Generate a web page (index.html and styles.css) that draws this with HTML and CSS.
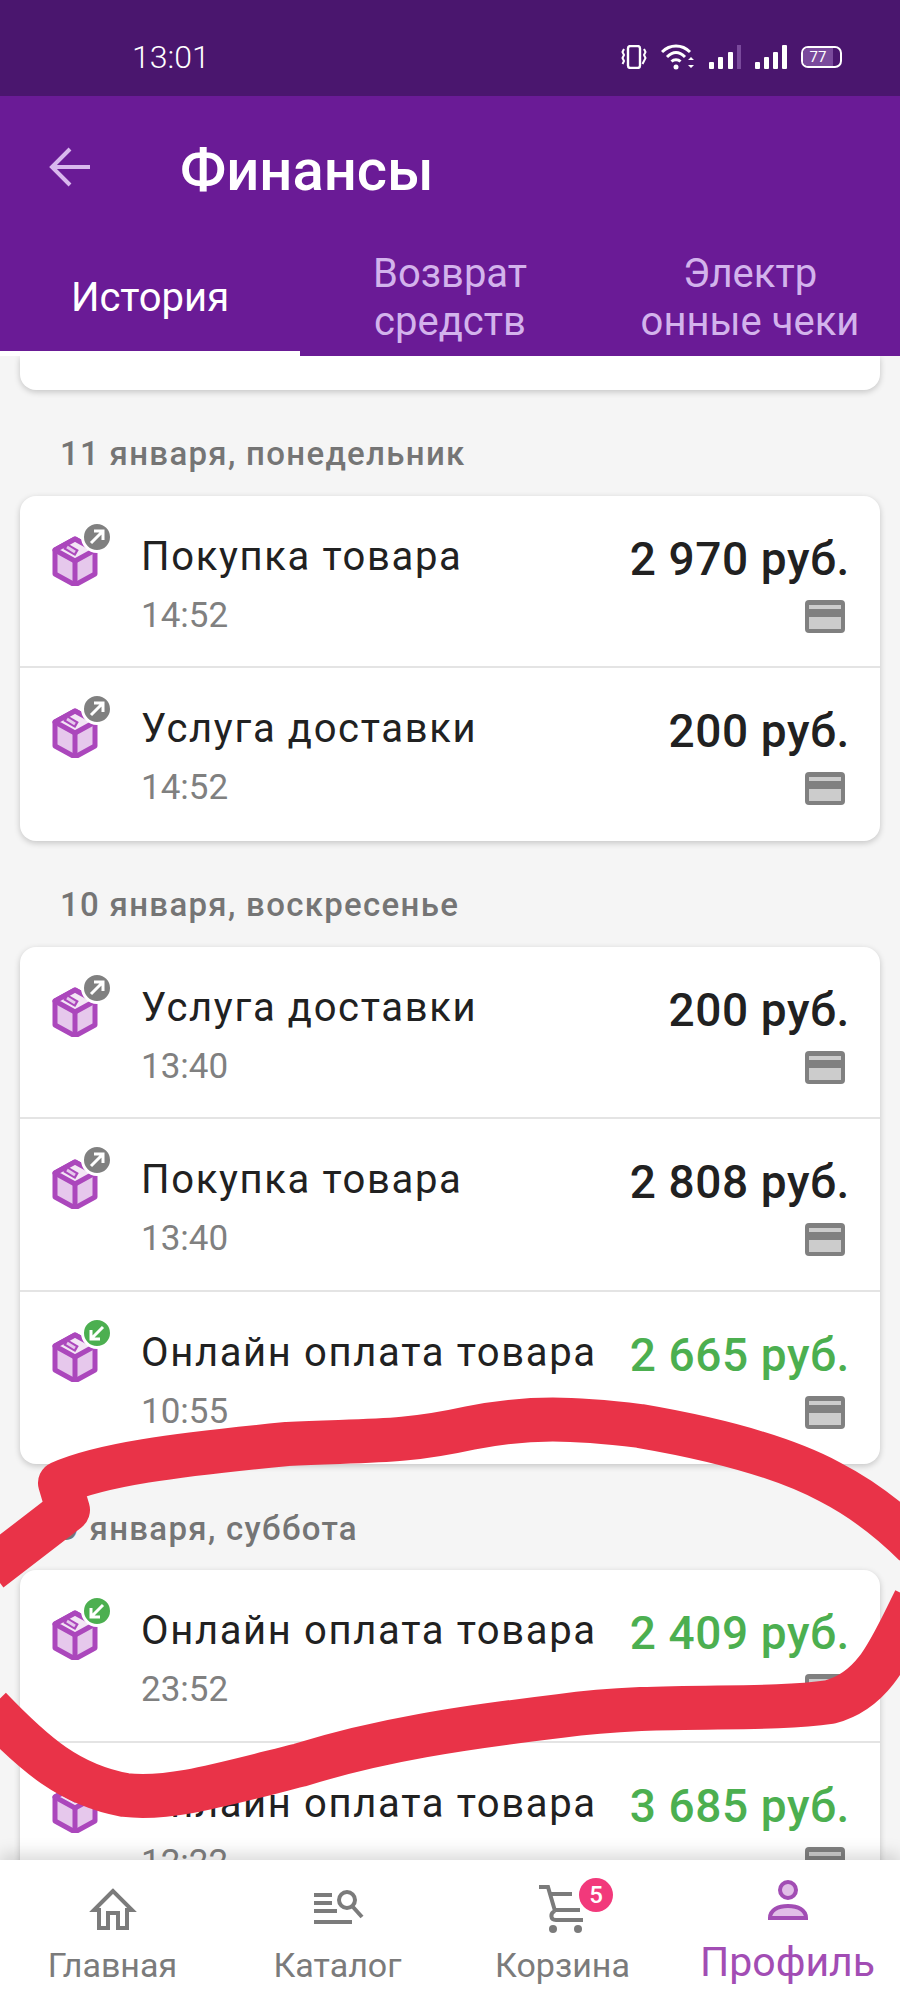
FILE: index.html
```html
<!DOCTYPE html>
<html lang="ru">
<head>
    <meta charset="UTF-8">
    <meta name="viewport" content="width=device-width, initial-scale=1.0">
    <title>Финансы</title>
    <link rel="stylesheet" href="styles.css">
</head>
<body>
    <svg class="defs">
        <symbol id="box" viewBox="0 0 64 64">
            <path d="M27 17L47 28V52L27 63L7 52V28Z" fill="#e6c8ec" stroke="#ab47bc" stroke-width="5" stroke-linejoin="round"/>
            <path d="M27 17L47 28L27 39L7 28Z" fill="#f3e5f5" stroke="#ab47bc" stroke-width="5" stroke-linejoin="round"/>
            <path d="M27 39V63" stroke="#ab47bc" stroke-width="5"/>
            <path d="M17 24L29 31" stroke="#ab47bc" stroke-width="7"/>
            <path d="M19 25L27 30" stroke="#e6c8ec" stroke-width="3"/>
        </symbol>
        <symbol id="bank-card" viewBox="0 0 40 33">
            <rect width="40" height="33" rx="4" fill="#808080"/>
            <rect x="4" y="5" width="32" height="4" fill="#ccc"/>
            <rect x="4" y="17" width="32" height="12" fill="#ccc"/>
        </symbol>
    </svg>

    <div class="screen">
        <div class="status-bar">
            <span class="clock">13:01</span>
            <div class="status-icons">
                <svg width="26" height="24" viewBox="0 0 26 24" fill="none" stroke="#fff" stroke-width="2"><rect x="7" y="1" width="12" height="22" rx="2.5" stroke-width="2.4"/><path d="M3 4l-1.5 3L3 10l-1.5 3L3 16l-1.5 3M23 4l1.5 3L23 10l1.5 3L23 16l-1.5 3"/></svg>
                <svg width="34" height="26" viewBox="0 0 34 26" fill="none" stroke="#fff" stroke-width="3"><path d="M1 8C9 0 21 0 29 8M6 13C12 7 18 7 24 13M10.500 17.500C13 15 17 15 19.500 17.500"/><circle cx="15" cy="23" r="2.500" fill="#fff" stroke="none"/><path d="M27 16l3-3 3 3zM27 21l3 3 3-3z" fill="#fff" stroke="none"/></svg>
                <svg width="32" height="26" viewBox="0 0 32 26" fill="#fff"><rect x="0" y="18" width="5" height="7" rx="1"/><rect x="9" y="13" width="5" height="12" rx="1"/><rect x="19" y="8" width="5" height="17" rx="1"/><rect x="28" y="1" width="4" height="24" fill="#7a4a9c"/></svg>
                <svg width="32" height="26" viewBox="0 0 32 26" fill="#fff"><rect x="0" y="18" width="5" height="7" rx="1"/><rect x="9" y="13" width="5" height="12" rx="1"/><rect x="18" y="8" width="5" height="17" rx="1"/><rect x="27" y="1" width="5" height="24" rx="1"/></svg>
                <div class="battery"><span class="battery-level">77</span></div>
            </div>
        </div>

        <div class="top-bar">
            <svg class="back" width="44" height="44" viewBox="0 0 44 44" fill="none" stroke="#d9b8ee" stroke-width="4"><path d="M42 21H5M22 3L4 21l18 18"/></svg>
            <h1 class="title">Финансы</h1>
        </div>

        <div class="tabs">
            <div class="tab active">История</div>
            <div class="tab">Возврат<br>средств</div>
            <div class="tab">Электр<br>онные чеки</div>
        </div>

        <div class="content">
            <div class="card card-cut"></div>

            <div class="day">11 января, понедельник</div>
            <div class="card">
                <div class="row">
                    <div class="op-icon"><svg width="64" height="64"><use href="#box"/></svg><span class="op-badge out"><svg width="18" height="18" viewBox="0 0 18 18" fill="none" stroke="#fff" stroke-width="3"><path d="M3 15L14 4M6 3h9v9"/></svg></span></div>
                    <div class="info"><div class="name">Покупка товара</div><div class="time">14:52</div></div>
                    <div class="sum"><div class="amount">2 970 руб.</div><svg width="40" height="33"><use href="#bank-card"/></svg></div>
                </div>
                <div class="row">
                    <div class="op-icon"><svg width="64" height="64"><use href="#box"/></svg><span class="op-badge out"><svg width="18" height="18" viewBox="0 0 18 18" fill="none" stroke="#fff" stroke-width="3"><path d="M3 15L14 4M6 3h9v9"/></svg></span></div>
                    <div class="info"><div class="name">Услуга доставки</div><div class="time">14:52</div></div>
                    <div class="sum"><div class="amount">200 руб.</div><svg width="40" height="33"><use href="#bank-card"/></svg></div>
                </div>
            </div>

            <div class="day">10 января, воскресенье</div>
            <div class="card">
                <div class="row">
                    <div class="op-icon"><svg width="64" height="64"><use href="#box"/></svg><span class="op-badge out"><svg width="18" height="18" viewBox="0 0 18 18" fill="none" stroke="#fff" stroke-width="3"><path d="M3 15L14 4M6 3h9v9"/></svg></span></div>
                    <div class="info"><div class="name">Услуга доставки</div><div class="time">13:40</div></div>
                    <div class="sum"><div class="amount">200 руб.</div><svg width="40" height="33"><use href="#bank-card"/></svg></div>
                </div>
                <div class="row">
                    <div class="op-icon"><svg width="64" height="64"><use href="#box"/></svg><span class="op-badge out"><svg width="18" height="18" viewBox="0 0 18 18" fill="none" stroke="#fff" stroke-width="3"><path d="M3 15L14 4M6 3h9v9"/></svg></span></div>
                    <div class="info"><div class="name">Покупка товара</div><div class="time">13:40</div></div>
                    <div class="sum"><div class="amount">2 808 руб.</div><svg width="40" height="33"><use href="#bank-card"/></svg></div>
                </div>
                <div class="row">
                    <div class="op-icon"><svg width="64" height="64"><use href="#box"/></svg><span class="op-badge in"><svg width="18" height="18" viewBox="0 0 18 18" fill="none" stroke="#fff" stroke-width="3"><path d="M15 3L4 14M3 6v9h9"/></svg></span></div>
                    <div class="info"><div class="name">Онлайн оплата товара</div><div class="time">10:55</div></div>
                    <div class="sum"><div class="amount green">2 665 руб.</div><svg width="40" height="33"><use href="#bank-card"/></svg></div>
                </div>
            </div>

            <div class="day">9 января, суббота</div>
            <div class="card">
                <div class="row">
                    <div class="op-icon"><svg width="64" height="64"><use href="#box"/></svg><span class="op-badge in"><svg width="18" height="18" viewBox="0 0 18 18" fill="none" stroke="#fff" stroke-width="3"><path d="M15 3L4 14M3 6v9h9"/></svg></span></div>
                    <div class="info"><div class="name">Онлайн оплата товара</div><div class="time">23:52</div></div>
                    <div class="sum"><div class="amount green">2 409 руб.</div><svg width="40" height="33"><use href="#bank-card"/></svg></div>
                </div>
                <div class="row">
                    <div class="op-icon"><svg width="64" height="64"><use href="#box"/></svg><span class="op-badge in"><svg width="18" height="18" viewBox="0 0 18 18" fill="none" stroke="#fff" stroke-width="3"><path d="M15 3L4 14M3 6v9h9"/></svg></span></div>
                    <div class="info"><div class="name">Онлайн оплата товара</div><div class="time">12:22</div></div>
                    <div class="sum"><div class="amount green">3 685 руб.</div><svg width="40" height="33"><use href="#bank-card"/></svg></div>
                </div>
            </div>
        </div>

        <div class="bottom-nav">
            <div class="nav-item">
                <svg width="64" height="64" viewBox="0 0 64 64" fill="none" stroke="#7b7b7b" stroke-width="4"><path d="M32 13L13 32H18V50H27V35H37V50H46V32H51Z"/></svg>
                <span class="nav-label">Главная</span>
            </div>
            <div class="nav-item">
                <svg width="64" height="64" viewBox="0 0 64 64" fill="none" stroke="#7b7b7b" stroke-width="4"><path d="M8 17H26M8 25H26M8 33H31M8 44H46" /><circle cx="41" cy="22" r="8"/><path d="M47 29L56 39"/></svg>
                <span class="nav-label">Каталог</span>
            </div>
            <div class="nav-item">
                <svg width="64" height="64" viewBox="0 0 64 64" fill="none" stroke="#7b7b7b" stroke-width="4"><path d="M8 9H17L24 33M19 16H41M24 32H49M52 42H25C19 42 19 35 24 33"/><circle cx="22" cy="51" r="4" fill="#7b7b7b" stroke="none"/><circle cx="47" cy="51" r="4" fill="#7b7b7b" stroke="none"/></svg>
                <span class="cart-count">5</span>
                <span class="nav-label">Корзина</span>
            </div>
            <div class="nav-item selected">
                <svg width="64" height="64" viewBox="0 0 64 64" fill="#e1bee7" stroke="#a24db4" stroke-width="4"><circle cx="32" cy="12" r="8"/><path d="M14 40C14 32 22 28 32 28S50 32 50 40Z"/></svg>
                <span class="nav-label">Профиль</span>
            </div>
        </div>

        <!-- red marker drawn by hand over the screenshot -->
        <svg class="marker" width="900" height="2000" viewBox="0 0 900 2000" fill="none">
            <path d="M-10 1570L68 1510L60 1483C100 1465 172 1455 287 1444C370 1440 402 1443 470 1428C530 1416 574 1418 640 1426C710 1438 780 1455 830 1482C865 1500 890 1520 915 1545" stroke="#e93348" stroke-width="44" stroke-linejoin="round"/>
            <path d="M915 1600C890 1650 875 1690 830 1702C760 1712 660 1702 560 1716C460 1728 380 1740 300 1765C220 1785 170 1800 125 1795C70 1785 35 1755 -10 1708" stroke="#e93348" stroke-width="44"/>
        </svg>
    </div>
</body>
</html>
```

FILE: styles.css
```css
body {
    margin: 0;
    font-family: Roboto, "Noto Sans", sans-serif;
    background: #f5f5f5;
}

.defs {
    position: absolute;
    width: 0;
    height: 0;
}

.screen {
    position: relative;
    display: flex;
    flex-direction: column;
    width: 900px;
    height: 2000px;
    overflow: hidden;
}

.status-bar {
    display: flex;
    justify-content: space-between;
    align-items: center;
    height: 96px;
    padding: 18px 58px 0 132px;
    box-sizing: border-box;
    background: #4a166e;
    color: #fff;
}

.clock {
    font-size: 32px;
    font-weight: 300;
}

.status-icons {
    display: flex;
    align-items: center;
    gap: 14px;
}

.battery {
    width: 41px;
    height: 22px;
    box-sizing: border-box;
    border: 2px solid #fff;
    border-radius: 7px;
    overflow: hidden;
}

.battery-level {
    display: block;
    width: 30px;
    height: 100%;
    background: #7a4a9c;
    font-size: 15px;
    line-height: 18px;
    text-align: center;
}

.top-bar {
    display: flex;
    align-items: flex-start;
    height: 144px;
    padding: 50px 0 0 48px;
    box-sizing: border-box;
    background: #6a1b96;
}

.title {
    margin: 0 0 0 88px;
    color: #fff;
    font-size: 58px;
    font-weight: 500;
    line-height: 48px;
}

.tabs {
    display: flex;
    height: 116px;
    background: #6a1b96;
}

.tab {
    display: flex;
    flex: 1;
    align-items: center;
    justify-content: center;
    box-sizing: border-box;
    color: #d3b3ec;
    font-size: 40px;
    line-height: 48px;
    text-align: center;
}

.tab.active {
    padding-top: 5px;
    color: #fff;
    border-bottom: 5px solid #fff;
}

.content {
    flex: 1;
    overflow: hidden;
}

.card {
    margin: 0 20px;
    background: #fff;
    border-radius: 16px;
    box-shadow: 0 2px 6px rgba(0, 0, 0, 0.2);
}

.card-cut {
    height: 33.500px;
    border-radius: 0 0 16px 16px;
}

.day {
    display: flex;
    align-items: center;
    height: 106px;
    padding: 22px 0 0 60px;
    box-sizing: border-box;
    color: #757575;
    font-size: 33px;
    font-weight: 500;
    letter-spacing: 1.300px;
}

.row {
    display: flex;
    height: 172.500px;
    padding-top: 26px;
    box-sizing: border-box;
    border-bottom: 2px solid #e4e4e4;
}

.row:last-child {
    border-bottom: none;
}

.op-icon {
    position: relative;
    width: 64px;
    height: 64px;
    margin-left: 28px;
}

.op-badge {
    position: absolute;
    top: -1px;
    right: -1px;
    display: flex;
    align-items: center;
    justify-content: center;
    width: 26px;
    height: 26px;
    border: 3px solid #fff;
    border-radius: 50%;
}

.op-badge.out {
    background: #808080;
}

.op-badge.in {
    background: #4caf50;
}

.info {
    flex: 1;
    margin-left: 29px;
    padding-top: 11px;
}

.name {
    color: #212121;
    font-size: 40px;
    line-height: 48px;
    letter-spacing: 1.650px;
    white-space: nowrap;
}

.time {
    margin-top: 15px;
    color: #808080;
    font-size: 35px;
    line-height: 40px;
}

.sum {
    display: flex;
    flex-direction: column;
    align-items: flex-end;
    padding: 11px 35px 0 0;
}

.amount {
    margin-bottom: 15px;
    margin-right: -5px;
    color: #212121;
    font-size: 46px;
    font-weight: 500;
    line-height: 52px;
    letter-spacing: 0.600px;
    white-space: nowrap;
}

.amount.green {
    color: #4caf50;
}

.bottom-nav {
    position: relative;
    display: flex;
    height: 140px;
    background: #fff;
    box-shadow: 0 -6px 16px rgba(0, 0, 0, 0.15);
}

.nav-item {
    position: relative;
    display: flex;
    flex: 1;
    flex-direction: column;
    align-items: center;
    padding-top: 18px;
    box-sizing: border-box;
}

.nav-label {
    margin-top: 5px;
    color: #7b7b7b;
    font-size: 34px;
    line-height: 36px;
    white-space: nowrap;
}

.selected .nav-label {
    margin-top: 2px;
    color: #a24db4;
    font-size: 41px;
}

.cart-count {
    position: absolute;
    top: 18px;
    left: 129px;
    width: 34px;
    height: 34px;
    border-radius: 50%;
    background: #f2397b;
    color: #fff;
    font-size: 24px;
    font-weight: 500;
    line-height: 34px;
    text-align: center;
}

.marker {
    position: absolute;
    top: 0;
    left: 0;
    pointer-events: none;
}
```
